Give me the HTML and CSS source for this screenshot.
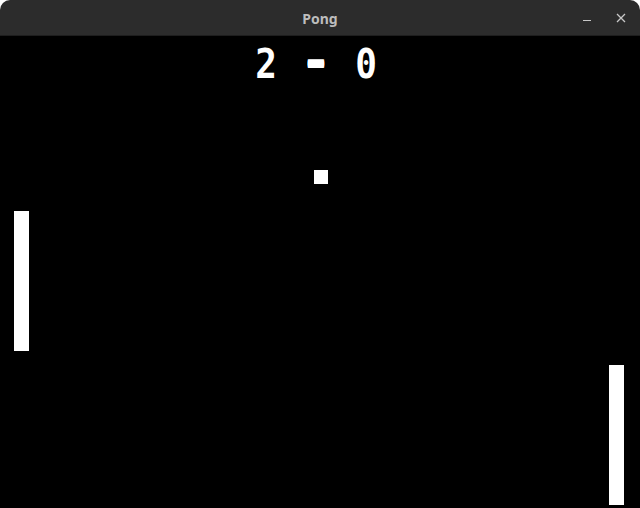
FILE: index.html
```html
<!DOCTYPE html>
<html>
<head>
<meta charset="utf-8">
<title>Pong</title>
<link rel="stylesheet" href="styles.css">
</head>
<body>
<div class="window">
  <header class="titlebar">
    <div class="title">Pong</div>
    <div class="controls">
      <button class="ctl" aria-label="Minimize">
        <svg width="10" height="10" viewBox="0 0 10 10"><rect x="1" y="7" width="8" height="1" fill="#c8c8c8"/></svg>
      </button>
      <button class="ctl" aria-label="Close">
        <svg width="10" height="10" viewBox="0 0 10 10"><path d="M1 1 L9 9 M9 1 L1 9" stroke="#c8c8c8" stroke-width="1.3"/></svg>
      </button>
    </div>
  </header>
  <main class="court">
    <div class="score"><span class="digit">2</span> <span class="dash">-</span> <span class="digit">0</span></div>
    <div class="ball" style="left:314px; top:134px;"></div>
    <div class="paddle" style="left:14px; top:175px;"></div>
    <div class="paddle" style="left:609px; top:329px;"></div>
  </main>
</div>
</body>
</html>
```
FILE: styles.css
```css
html, body {
  margin: 0;
  padding: 0;
  background: #ffffff;
}
.window {
  width: 640px;
  height: 508px;
  display: flex;
  flex-direction: column;
  overflow: hidden;
}
.titlebar {
  height: 36px;
  flex: 0 0 36px;
  background: #2c2c2c;
  border-radius: 10px 10px 0 0;
  position: relative;
  display: flex;
  align-items: center;
  justify-content: center;
  box-sizing: border-box;
  border-bottom: 1px solid #1e1e1e;
}
.title {
  font-family: "Noto Sans", "DejaVu Sans", sans-serif;
  font-weight: bold;
  font-size: 14px;
  color: #bdbdbd;
  padding-top: 2px;
}
.controls {
  position: absolute;
  right: 10px;
  top: 9px;
  display: flex;
  gap: 16px;
}
.ctl {
  width: 18px;
  height: 18px;
  padding: 0;
  border: 0;
  background: transparent;
  display: flex;
  align-items: center;
  justify-content: center;
}
.court {
  flex: 1;
  background: #000000;
  position: relative;
  display: flex;
  justify-content: center;
}
.score {
  font-family: "DejaVu Sans Mono", "Liberation Mono", monospace;
  font-weight: bold;
  font-size: 40px;
  line-height: 40px;
  height: 40px;
  color: #ffffff;
  margin-top: 8px;
  margin-right: 7px;
  white-space: pre;
  letter-spacing: 0.8px;
}
.digit {
  display: inline-block;
  transform: scaleX(0.9);
}
.dash {
  display: inline-block;
  transform: translateY(-2px) scaleX(1.3);
  text-shadow: 0 -1px 0 #fff, 0 -2px 0 #fff, 0 1px 0 #fff;
}
.ball {
  position: absolute;
  width: 14px;
  height: 14px;
  background: #ffffff;
}
.paddle {
  position: absolute;
  width: 15px;
  height: 140px;
  background: #ffffff;
}
```
